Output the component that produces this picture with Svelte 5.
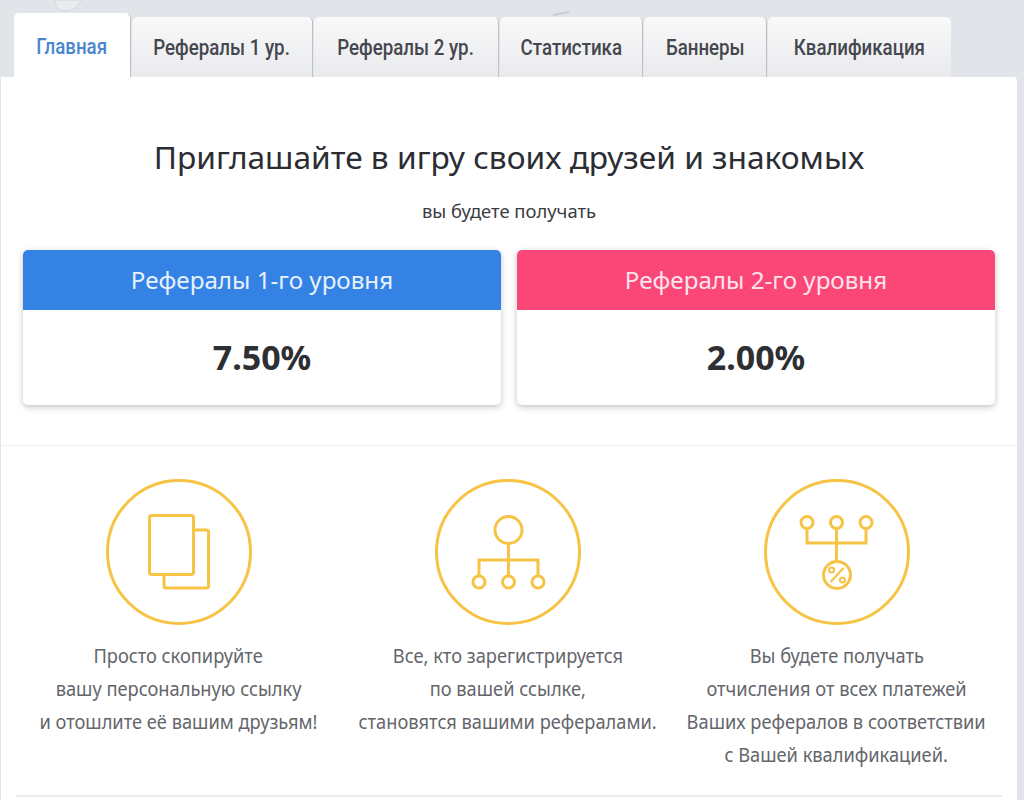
<script>
	const tabs = [
		{ title: 'Главная', active: true },
		{ title: 'Рефералы 1 ур.' },
		{ title: 'Рефералы 2 ур.' },
		{ title: 'Статистика' },
		{ title: 'Баннеры' },
		{ title: 'Квалификация' }
	];

	const levels = [
		{ title: 'Рефералы 1-го уровня', value: '7.50%', color: 'blue' },
		{ title: 'Рефералы 2-го уровня', value: '2.00%', color: 'pink' }
	];

	const steps = [
		{ icon: 'copy', lines: ['Просто скопируйте', 'вашу персональную ссылку', 'и отошлите её вашим друзьям!'] },
		{ icon: 'tree', lines: ['Все, кто зарегистрируется', 'по вашей ссылке,', 'становятся вашими рефералами.'] },
		{
			icon: 'percent',
			lines: ['Вы будете получать', 'отчисления от всех платежей', 'Ваших рефералов в соответствии', 'с Вашей квалификацией.']
		}
	];
</script>

<div class="page">
	<!-- faint sketch showing through the page background -->
	<svg class="sketch" viewBox="0 0 600 20" width="600" height="20" fill="none">
		<path d="M55 0c0 6 3 11 10 11s13-4 16-11z" fill="#e9ebee" stroke="#d3d6da" />
		<path d="M553 15l16-3" stroke="#c9ccd1" stroke-width="2" />
	</svg>

	<nav class="tabs">
		{#each tabs as tab}
			<a href="#top" class="tab" class:active={tab.active}><span>{tab.title}</span></a>
		{/each}
	</nav>

	<main class="panel">
		<section class="intro">
			<h1>Приглашайте в игру своих друзей и знакомых</h1>
			<p class="lead">вы будете получать</p>
			<div class="levels">
				{#each levels as level}
					<div class="level">
						<div class="levelHead {level.color}">{level.title}</div>
						<div class="levelValue">{level.value}</div>
					</div>
				{/each}
			</div>
		</section>

		<section class="steps">
			{#each steps as step}
				<div class="step">
					<svg class="icon" viewBox="0 0 146 146" width="146" height="146" fill="none" stroke="#f6c344" stroke-width="3">
						<circle cx="73" cy="73" r="71.5" />
						{#if step.icon === 'copy'}
							<rect x="43.5" y="36.5" width="44" height="59" rx="2.5" />
							<path d="M88 51h12.5a2 2 0 0 1 2 2v54a2 2 0 0 1-2 2H60a2 2 0 0 1-2-2V96" />
						{:else if step.icon === 'tree'}
							<circle cx="73.5" cy="51" r="13.5" />
							<path d="M73.5 65v32M44 97V81h59v16" />
							<circle cx="44" cy="103" r="6" />
							<circle cx="73.5" cy="103" r="6" />
							<circle cx="103" cy="103" r="6" />
						{:else}
							<circle cx="43" cy="43.5" r="6" />
							<circle cx="72.5" cy="43.5" r="6" />
							<circle cx="102" cy="43.5" r="6" />
							<path d="M43 50v14h59V50M72.5 50v32" />
							<circle cx="73" cy="96" r="13.5" />
							<path d="M66.5 103l13-14" stroke-width="2.2" />
							<circle cx="67.5" cy="91" r="2.6" stroke-width="2" />
							<circle cx="78.5" cy="101" r="2.6" stroke-width="2" />
						{/if}
					</svg>
					<p class="stepText">
						{#each step.lines as line}
							<span>{line}</span>
						{/each}
					</p>
				</div>
			{/each}
		</section>

		<div class="rule"></div>
	</main>
</div>

<style>
	:global(body) {
		background-color: #e1e4e9;
	}

	.page {
		position: relative;
		width: 1024px;
		height: 800px;
		overflow: hidden;
		box-sizing: border-box;
		padding: 13px 0 0 1px;
		font-family: 'Liberation Sans', sans-serif;
	}

	.sketch {
		position: absolute;
		top: 0;
		left: 0;
	}

	.tabs {
		position: relative;
		display: flex;
		align-items: flex-end;
		height: 64px;
		padding-left: 13px;
		gap: 1px;
	}

	.tab {
		display: flex;
		align-items: center;
		justify-content: center;
		box-sizing: border-box;
		height: 60px;
		border-radius: 5px 5px 0 0;
		background: linear-gradient(#f9f9fa, #e9eaec);
		border-right: 1px solid #bfc1c5;
		color: #45474f;
		font-family: 'Roboto', sans-serif;
		font-weight: 500;
		font-size: 21.5px;
		text-decoration: none;
		white-space: nowrap;
	}

	.tab span {
		display: inline-block;
		transform: scaleX(0.87);
	}

	.tab:nth-child(1) {
		width: 117px;
		height: 64px;
		background: #fff;
		padding-top: 3px;
		color: #4a86cf;
	}

	.tab:nth-child(2) {
		width: 181px;
	}

	.tab:nth-child(3) {
		width: 185px;
	}

	.tab:nth-child(4) {
		width: 143px;
	}

	.tab:nth-child(5) {
		width: 123px;
	}

	.tab:nth-child(6) {
		width: 183px;
		border-right: none;
	}

	.panel {
		position: relative;
		box-sizing: border-box;
		width: 1016px;
		height: 760px;
		background: #fff;
		border-radius: 0 4px 0 0;
	}

	.intro {
		box-sizing: border-box;
		height: 369px;
		padding: 58px 22px 0;
		border-bottom: 1px solid #eef0f2;
	}

	h1 {
		margin: 0;
		text-align: center;
		font-family: 'Noto Sans', sans-serif;
		font-weight: 400;
		font-size: 31.7px;
		line-height: 44px;
		color: #2b2d33;
	}

	.lead {
		margin: 20px 0 0;
		text-align: center;
		font-family: 'Noto Sans', sans-serif;
		font-size: 18.4px;
		line-height: 24px;
		color: #3a3c42;
	}

	.levels {
		display: flex;
		gap: 16px;
		margin-top: 27px;
	}

	.level {
		width: 478px;
		height: 155px;
		border-radius: 5px;
		background: #fff;
		overflow: hidden;
		box-shadow: 0 2px 6px rgba(0, 0, 0, 0.24);
	}

	.levelHead {
		height: 60px;
		line-height: 60px;
		text-align: center;
		color: #e6f1fc;
		font-family: 'Noto Sans', sans-serif;
		font-size: 24.2px;
	}

	.blue {
		background-color: #3582e5;
	}

	.pink {
		background-color: #fb4678;
		color: #fde3ea;
	}

	.levelValue {
		height: 95px;
		line-height: 95px;
		text-align: center;
		color: #2e2f33;
		font-family: 'Noto Sans', sans-serif;
		font-weight: 700;
		font-size: 34px;
	}

	.steps {
		display: grid;
		grid-template-columns: repeat(3, 329px);
		padding: 33px 0 0 13px;
		height: 349px;
		box-sizing: border-box;
	}

	.step {
		display: flex;
		flex-direction: column;
		align-items: center;
	}

	.icon {
		display: block;
	}

	.stepText {
		margin: 14px 0 0;
		display: flex;
		flex-direction: column;
		align-items: center;
		color: #64666b;
		font-family: 'Noto Sans', sans-serif;
		font-size: 20.3px;
		line-height: 33px;
		white-space: nowrap;
	}

	.stepText span {
		display: block;
		transform: scaleX(0.9);
	}

	.rule {
		height: 2px;
		margin: 0 15px;
		background-color: #e8ebee;
	}
</style>
